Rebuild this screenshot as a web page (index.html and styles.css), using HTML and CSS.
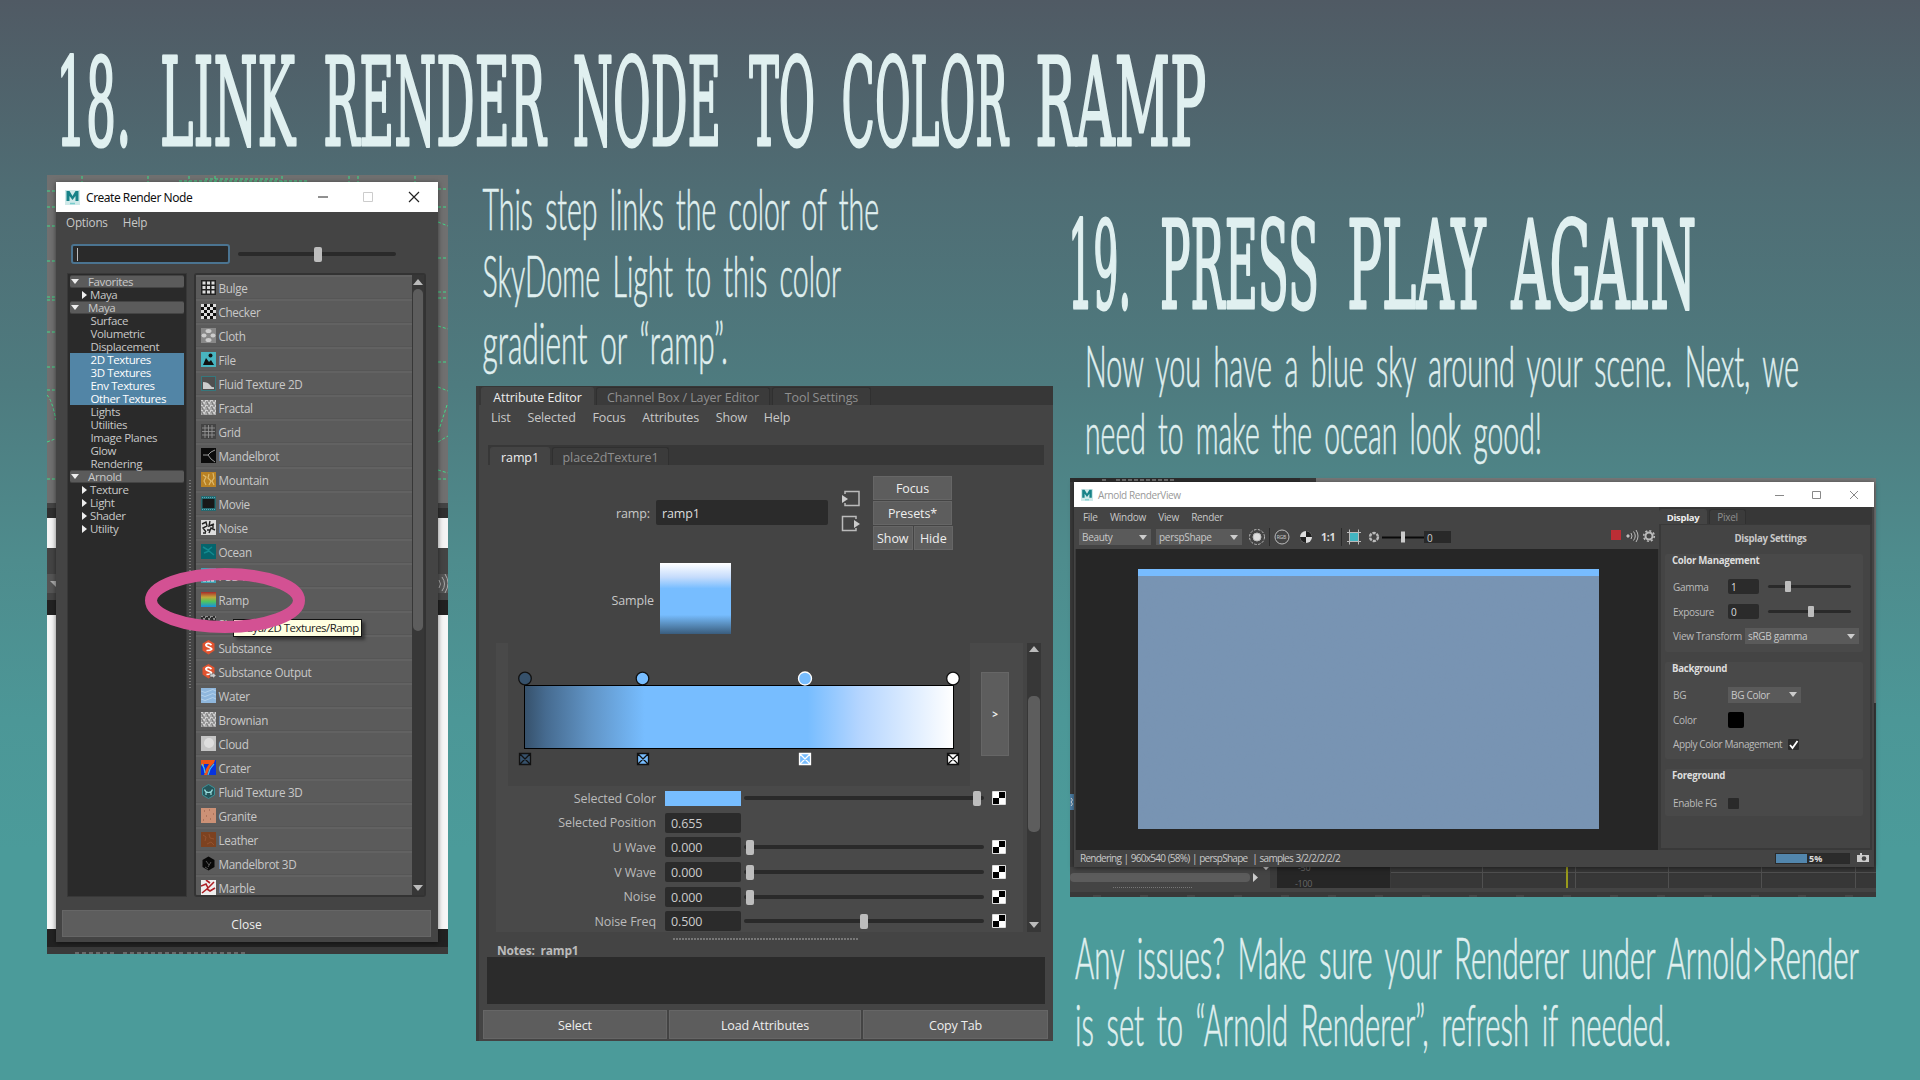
FILE: index.html
```html
<!DOCTYPE html>
<html lang="en">
<head>
<meta charset="utf-8">
<title>Link Render Node to Color Ramp</title>
<link rel="stylesheet" href="styles.css">
</head>
<body>
<svg width="0" height="0" class="defs">
  <defs>
    <symbol id="maya" viewBox="0 0 15 15"><rect width="15" height="15" fill="#cfe9e9"/><path d="M1.500 11V1h3l3 5 3-5h3v10h-3V6l-3 4-3-4v5z" fill="#178288"/><path d="M5 13.500h5" stroke="#7cc" stroke-width="1.500"/></symbol>
    <symbol id="checker" viewBox="0 0 14 14"><rect width="14" height="14" rx="1" fill="#ddd"/><path d="M7 1h6v6H7zM1 7h6v6H1z" fill="#000"/><path d="M1 1h6v6H1zM7 7h6v6H7z" fill="#fff"/></symbol>
    <pattern id="weave" width="5" height="5" patternUnits="userSpaceOnUse"><path d="M0 0h2v1H0zM2 2h2v2H2zM4 0h1v2H4z" fill="#fff" opacity=".45"/><path d="M1 3h1v2M3 0v1.500M0 2h1" stroke="#000" opacity=".3"/></pattern>
    <filter id="grain" x="0" y="0" width="100%" height="100%"><feTurbulence type="fractalNoise" baseFrequency=".35" numOctaves="2"/><feColorMatrix values="0 0 0 0 .2  0 0 0 0 .3  0 0 0 0 .45  .9 0 0 0 -.3"/></filter>
    <linearGradient id="rampv" x2="0" y2="1"><stop offset="0" stop-color="#a72b2b"/><stop offset=".35" stop-color="#c2a73a"/><stop offset=".62" stop-color="#53c65b"/><stop offset="1" stop-color="#168fe0"/></linearGradient>
  </defs>
</svg>

<main class="slide">
  <h1><svg width="1920" height="175">
    <g class="big" transform="scale(.4 1)">
      <text x="140" y="145" textLength="188" lengthAdjust="spacingAndGlyphs">18.</text>
      <text x="400" y="145" textLength="338" lengthAdjust="spacingAndGlyphs">LINK</text>
      <text x="808" y="145" textLength="557" lengthAdjust="spacingAndGlyphs">RENDER</text>
      <text x="1432" y="145" textLength="371" lengthAdjust="spacingAndGlyphs">NODE</text>
      <text x="1873" y="145" textLength="165" lengthAdjust="spacingAndGlyphs">TO</text>
      <text x="2104" y="145" textLength="416" lengthAdjust="spacingAndGlyphs">COLOR</text>
      <text x="2588" y="145" textLength="428" lengthAdjust="spacingAndGlyphs">RAMP</text>
    </g>
  </svg></h1>

  <div class="columns">
    <section class="shot shot-node">
      <svg class="backdrop" width="401" height="779">
        <g fill="none" stroke="#3fdc8a" stroke-dasharray="3 2">
          <path d="M35 1v7M101 1v7M142 1v7M168 1v7M235 1v7M302 1v7M311 1v7M368 1v7M132 6h130M158 4h75"/>
          <path d="M0 16h9M0 32h9M0 51h9M0 86h9M0 122h9M0 125h9M0 157h9M0 192h9M0 215h9M0 220q5 5 9 25M0 267l8-3M0 304h9"/>
          <path d="M391 14h10M391 32h10M391 47l10 4M391 83h10M391 117h10M391 123h10M391 151l10 3M391 187h10M391 212l10 4M400 230l-9 28M391 267l10-6M391 295l10 3M391 304h10"/>
        </g>
        <path d="M3 406h7v7z" fill="#aaa"/>
        <path d="M392 405q3 4 0 8M395 402q5 7 0 14M398 399q6 9 0 19" fill="none" stroke="#aaa"/>
        <path d="M28 778h40M76 778h60M140 778h24M166 778h34" stroke="#999" stroke-dasharray="4 3"/>
      </svg>
      <div class="window node-window">
        <header class="titlebar">
          <svg width="15" height="15"><use href="#maya"/></svg><span>Create Render Node</span>
          <svg class="winbtns" width="102" height="12"><path d="M0 6h10" stroke="#222"/><path d="M45.500 1.500h9v9h-9z" fill="none" stroke="#ccc"/><path d="M91 1l10 10M101 1l-10 10" stroke="#222" stroke-width="1.200"/></svg>
        </header>
        <nav class="menu"><span>Options</span><span>Help</span></nav>
        <div class="search"><div class="search-box"></div><div class="track"><i style="left:76px"></i></div></div>
        <div class="panes">
          <div class="tree">
            <div class="hd"><b></b>Favorites</div>
            <div class="sub"><u></u>Maya</div>
            <div class="hd"><b></b>Maya</div>
            <div>Surface</div><div>Volumetric</div><div>Displacement</div>
            <div class="sel">2D Textures</div><div class="sel">3D Textures</div><div class="sel">Env Textures</div><div class="sel">Other Textures</div>
            <div>Lights</div><div>Utilities</div><div>Image Planes</div><div>Glow</div><div>Rendering</div>
            <div class="hd"><b></b>Arnold</div>
            <div class="sub"><u></u>Texture</div><div class="sub"><u></u>Light</div><div class="sub"><u></u>Shader</div><div class="sub"><u></u>Utility</div>
          </div>
          <div class="splitter"></div>
          <div class="list">
            <div class="items">
              <div><svg viewBox="0 0 15 15"><rect width="15" height="15" fill="#222"/><path d="M1.500 3h12M1.500 7.500h12M1.500 12h12" stroke="#ddd" stroke-width="2.800" stroke-dasharray="3 1.500"/></svg>Bulge</div>
              <div><svg viewBox="0 0 15 15"><rect width="15" height="15" fill="#111"/><path d="M0 1.500h15M0 7.500h15M0 13.500h15" stroke="#ddd" stroke-width="3" stroke-dasharray="3"/><path d="M3 4.500h12M3 10.500h12" stroke="#ddd" stroke-width="3" stroke-dasharray="3"/></svg>Checker</div>
              <div><svg viewBox="0 0 15 15"><rect width="15" height="15" fill="#888"/><g fill="#ccc"><ellipse cx="7.500" cy="3" rx="3" ry="2"/><ellipse cx="3" cy="7.500" rx="2.500" ry="2"/><ellipse cx="12" cy="7.500" rx="2.500" ry="2"/><ellipse cx="7.500" cy="12" rx="3" ry="2"/></g></svg>Cloth</div>
              <div><svg viewBox="0 0 15 15"><rect width="15" height="15" fill="#48b4c0"/><path d="M2 13l3-7 3 4 2-2 3 5z" fill="#111"/><circle cx="9.500" cy="3.500" r="2" fill="#111"/></svg>File</div>
              <div><svg viewBox="0 0 15 15"><rect x=".5" y=".5" width="14" height="14" fill="#505050" stroke="#36777c"/><path d="M2 6q5 0 7 3t4 2v2H2z" fill="#ccc"/></svg>Fluid Texture 2D</div>
              <div><svg viewBox="0 0 15 15"><rect width="15" height="15" fill="#aaa"/><rect width="15" height="15" fill="url(#weave)"/></svg>Fractal</div>
              <div><svg viewBox="0 0 15 15"><rect width="15" height="15" fill="#444"/><path d="M1 4h13M1 7.500h13M1 11h13M4 1v13M7.500 1v13M11 1v13" stroke="#999" stroke-width=".8"/></svg>Grid</div>
              <div><svg viewBox="0 0 15 15"><rect width="15" height="15" fill="#0b0b0b"/><path d="M2 7h5l3-3 4-2M7 7l3 4 4 3" fill="none" stroke="#999"/></svg>Mandelbrot</div>
              <div><svg viewBox="0 0 15 15"><rect width="15" height="15" fill="#b98224"/><path d="M2 3l3 2-2 4 2 4M8 2l-1 4 3 3-2 4M12 1l1 5-2 3 2 4" fill="none" stroke="#ddb96c" stroke-width="1.200"/></svg>Mountain</div>
              <div><svg viewBox="0 0 15 15"><rect width="15" height="15" fill="#266a70"/><rect x="1.500" y="3" width="12" height="9" fill="#181818"/><path d="M1 1.500h13M1 13.500h13" stroke="#5ab" stroke-dasharray="1 1"/></svg>Movie</div>
              <div><svg viewBox="0 0 15 15"><rect width="15" height="15" fill="#ddd"/><path d="M1 4l4-2 1 4-4 2 3 4M9 1l-1 5 5-2M8 13l2-5 4 2M2 13h3M12 5v3M6 10h3" fill="none" stroke="#222" stroke-width="1.400"/></svg>Noise</div>
              <div><svg viewBox="0 0 15 15"><rect width="15" height="15" fill="#05646c"/><path d="M2 3l5 3 4-3M3 9l5-2 5 4" fill="none" stroke="#128a90" stroke-width="1.500"/></svg>Ocean</div>
              <div><svg viewBox="0 0 15 15"><rect width="15" height="15" fill="#3fa3b4"/><path d="M2 12h11" stroke="#eee" stroke-width="3" stroke-dasharray="3 1"/></svg>PSD File</div>
              <div><svg viewBox="0 0 15 15"><rect width="15" height="15" fill="url(#rampv)"/></svg>Ramp</div>
              <div><svg viewBox="0 0 15 15"><rect width="15" height="15" fill="#333"/><rect width="15" height="15" fill="url(#weave)"/></svg>Simplex Noise</div>
              <div><svg viewBox="0 0 15 15"><path d="M7.500 0l6 3.500v7l-6 4-6-4v-7z" fill="#e2532f"/><path d="M10.500 5q-3-2.500-5-1t2 3 3 2.500-5 1" fill="none" stroke="#fff" stroke-width="1.700"/></svg>Substance</div>
              <div><svg viewBox="0 0 15 15"><path d="M7.500 0l6 3.500v7l-6 4-6-4v-7z" fill="#e2532f"/><path d="M10.500 5q-3-2.500-5-1t2 3 3 2.500-5 1" fill="none" stroke="#fff" stroke-width="1.700"/><path d="M9 10h3V8.500l3 3-3 3V13H9z" fill="#ccc" stroke="#444" stroke-width=".5"/></svg>Substance Output</div>
              <div><svg viewBox="0 0 15 15"><rect width="15" height="15" fill="#8fb7dd"/><path d="M0 3q4 3 8 0t7 0M0 7q4 3 8 0t7 0M0 11q4 3 8 0t7 0" fill="none" stroke="#b4d2ec"/></svg>Water</div>
              <div><svg viewBox="0 0 15 15"><rect width="15" height="15" fill="#aaa"/><rect width="15" height="15" fill="url(#weave)"/></svg>Brownian</div>
              <div><svg viewBox="0 0 15 15"><rect width="15" height="15" fill="#c5c5c5"/><circle cx="8" cy="7" r="5" fill="#dedede"/></svg>Cloud</div>
              <div><svg viewBox="0 0 15 15"><rect width="15" height="15" fill="#0733dd"/><path d="M0 0h14l-1 3-4 4-3 8H3l2-6 3-5H3v3L0 5z" fill="#ef5615"/><path d="M1 4l2 4 1 5M13 4l-4 5-2 6" fill="none" stroke="#4bc3df" stroke-width="1.200"/></svg>Crater</div>
              <div><svg viewBox="0 0 15 15"><path d="M7.500.5l6 3.500v7l-6 3.500-6-3.500V4z" fill="#26555a" stroke="#3b9096"/><path d="M3.500 5.500q1 3 4 3t4-3M5 8v3M10 8v3" fill="none" stroke="#9dd" stroke-width="1.200"/></svg>Fluid Texture 3D</div>
              <div><svg viewBox="0 0 15 15"><rect width="15" height="15" fill="#cc9176"/><path d="M3 3h1M8 2h1M12 6h1M5 8h1M9 11h1M2 12h1" stroke="#8f5843"/></svg>Granite</div>
              <div><svg viewBox="0 0 15 15"><rect width="15" height="15" fill="#7d4220"/><path d="M2 3l3 2-1 4M8 2l1 4 4 1M6 12l4-2 3 3" fill="none" stroke="#935330"/></svg>Leather</div>
              <div><svg viewBox="0 0 15 15"><path d="M7.500.5l6 3.500v7l-6 3.500-6-3.500V4z" fill="#080808"/><path d="M5 5l3 4M10 6l-3 5M4 11l3 2" stroke="#555"/></svg>Mandelbrot 3D</div>
              <div><svg viewBox="0 0 15 15"><rect width="15" height="15" fill="#eee"/><path d="M0 6l5-2 2 4 6-6M1 13l5-4 3 2 5-3M5 0l4 3" fill="none" stroke="#ae1f25" stroke-width="1.600"/></svg>Marble</div>
            </div>
            <div class="sbar"><b class="up"></b><i></i><b class="dn"></b></div>
          </div>
        </div>
        <div class="btn close">Close</div>
      </div>
      <div class="tooltip">Maya/2D Textures/Ramp</div>
      <svg class="ring" width="162" height="67"><ellipse cx="81" cy="33.500" rx="74" ry="26.500" fill="none" stroke="#d35193" stroke-width="12"/></svg>
    </section>

    <section class="col-b">
      <svg width="577" height="211">
        <g class="body" transform="scale(.5 1)">
          <text x="13" y="55" textLength="793" lengthAdjust="spacingAndGlyphs">This step links the color of the</text>
          <text x="13" y="122" textLength="717" lengthAdjust="spacingAndGlyphs">SkyDome Light to this color</text>
          <text x="13" y="189" textLength="491" lengthAdjust="spacingAndGlyphs">gradient or “ramp”.</text>
        </g>
      </svg>
      <div class="attr">
        <div class="tabs outer"><span class="on">Attribute Editor</span><span class="t2">Channel Box / Layer Editor</span><span class="t3">Tool Settings</span></div>
        <nav class="menu"><span>List</span><span>Selected</span><span>Focus</span><span>Attributes</span><span>Show</span><span>Help</span></nav>
        <div class="tabs inner"><span class="on">ramp1</span><span class="t2">place2dTexture1</span></div>
        <div class="name-row">
          <label>ramp:</label><div class="field">ramp1</div>
          <svg width="20" height="42" fill="none" stroke="#bbb" stroke-width="1.500"><path d="M4 4V1.500h14v14H4V13"/><path d="M1 5l6 4-6 4z" fill="#ccc" stroke="none"/><path d="M15 29v-2.500H1.500v14H15V38"/><path d="M13 30l6 4-6 4z" fill="#ccc" stroke="none"/></svg>
          <div class="btns"><span class="btn wide">Focus</span><span class="btn wide">Presets*</span><span class="btn">Show</span><span class="btn">Hide</span></div>
        </div>
        <div class="sample-row"><label>Sample</label><div class="swatch"></div></div>
        <div class="scroller">
          <div class="content">
            <div class="ramp-row">
              <div class="ramp-area">
                <svg width="462" height="143">
                  <defs><linearGradient id="ramph"><stop offset="0" stop-color="#36516b"/><stop offset=".05" stop-color="#466b90"/><stop offset=".15" stop-color="#6093c4"/><stop offset=".28" stop-color="#77bdff"/><stop offset=".66" stop-color="#77bdff"/><stop offset=".78" stop-color="#b4d5ff"/><stop offset="1" stop-color="#fff"/></linearGradient></defs>
                  <rect x="16.500" y="42.500" width="429" height="63" fill="url(#ramph)" stroke="#000"/>
                  <g stroke="#111" stroke-width="1.300"><circle cx="17" cy="35.500" r="6.300" fill="#36516b"/><circle cx="134.500" cy="35.500" r="6.300" fill="#77bdff"/><circle cx="297" cy="35.500" r="6.500" fill="#77bdff" stroke="#fff"/><circle cx="445" cy="35.500" r="6.300" fill="#fff"/></g>
                  <g stroke="#111" stroke-width="1.300"><path d="M11.500 110.500h11v11h-11zl11 11m0-11l-11 11" fill="#36516b"/><path d="M129.500 110.500h11v11h-11zl11 11m0-11l-11 11" fill="#77bdff"/><path d="M291.500 110.500h11v11h-11zl11 11m0-11l-11 11" fill="#77bdff" stroke="#fff"/><path d="M439.500 110.500h11v11h-11zl11 11m0-11l-11 11" fill="#fff"/></g>
                </svg>
              </div>
              <div class="btn more">&gt;</div>
            </div>
            <div class="row"><label>Selected Color</label><div class="color"></div><div class="track"><i style="left:229px"></i></div><svg width="14" height="14"><use href="#checker"/></svg></div>
            <div class="row"><label>Selected Position</label><div class="field">0.655</div></div>
            <div class="row"><label>U Wave</label><div class="field">0.000</div><div class="track"><i style="left:2px"></i></div><svg width="14" height="14"><use href="#checker"/></svg></div>
            <div class="row"><label>V Wave</label><div class="field">0.000</div><div class="track"><i style="left:2px"></i></div><svg width="14" height="14"><use href="#checker"/></svg></div>
            <div class="row"><label>Noise</label><div class="field">0.000</div><div class="track"><i style="left:2px"></i></div><svg width="14" height="14"><use href="#checker"/></svg></div>
            <div class="row"><label>Noise Freq</label><div class="field">0.500</div><div class="track"><i style="left:116px"></i></div><svg width="14" height="14"><use href="#checker"/></svg></div>
          </div>
          <div class="sbar"><b class="up"></b><i></i><b class="dn"></b></div>
        </div>
        <div class="dots"></div>
        <div class="notes-label">Notes:&nbsp; ramp1</div>
        <div class="notes"></div>
        <footer><span class="btn">Select</span><span class="btn">Load Attributes</span><span class="btn">Copy Tab</span></footer>
      </div>
    </section>

    <section class="col-c">
      <svg width="850" height="303">
        <g class="big" transform="scale(.4 1)">
          <text x="-5" y="133" textLength="158" lengthAdjust="spacingAndGlyphs">19.</text>
          <text x="225" y="133" textLength="398" lengthAdjust="spacingAndGlyphs">PRESS</text>
          <text x="693" y="133" textLength="346" lengthAdjust="spacingAndGlyphs">PLAY</text>
          <text x="1104" y="133" textLength="462" lengthAdjust="spacingAndGlyphs">AGAIN</text>
        </g>
        <g class="body" transform="scale(.5 1)">
          <text x="30" y="212" textLength="1428" lengthAdjust="spacingAndGlyphs">Now you have a blue sky around your scene. Next, we</text>
          <text x="30" y="279" textLength="914" lengthAdjust="spacingAndGlyphs">need to make the ocean look good!</text>
        </g>
      </svg>
      <div class="shot-render">
        <svg class="backdrop" width="806" height="419">
          <rect width="806" height="419" fill="#3b3b3b"/><rect x="246" width="560" height="225" fill="#777"/><rect width="230" height="4" fill="#2c2c2c"/>
          <path d="M32 2h6M46 2h60" stroke="#aaa" stroke-dasharray="4 2"/>
          <rect x="0" y="316" width="4" height="16" fill="#4c7fa5"/><path d="M1 320q3 2 0 4q3 2 0 4" fill="none" stroke="#ddd"/>
          <rect y="389" width="200" height="30" fill="#444"/><rect y="395" width="180" height="9" rx="4" fill="#5c5c5c"/><path d="M183 395l5 4.500-5 4.500zM193 389h6l-3 3z" fill="#ccc"/><path d="M43 409.500h80" stroke="#777" stroke-dasharray="1 1"/>
          <rect x="207" y="389" width="113" height="21" fill="#262626"/><rect x="321" y="389" width="485" height="21" fill="#373737"/>
          <path d="M321 394.500h485M412.500 389v21M505.500 389v21M598.500 389v21M691.500 389v21M785.500 389v21" stroke="#505050"/><path d="M497 389v21" stroke="#999a1c" stroke-width="2"/>
          <rect y="410" width="806" height="9" fill="#444"/><rect y="414" width="806" height="5" fill="#393939"/><path d="M23 418h780" stroke="#555" stroke-dasharray="8 39"/>
          <text x="225" y="409">-100</text><text x="228" y="393">-50</text>
        </svg>
        <div class="window render-window">
          <header class="titlebar">
            <svg width="12" height="12"><use href="#maya"/></svg><span>Arnold RenderView</span>
            <svg class="winbtns" width="84" height="10" fill="none" stroke="#888"><path d="M0 5.500h9M37.500 1.500h8v7h-8zM75 1l8 8M83 1l-8 8"/></svg>
          </header>
          <div class="split">
            <div class="left">
              <nav class="menu"><span>File</span><span>Window</span><span>View</span><span>Render</span></nav>
              <div class="toolbar">
                <div class="drop d1">Beauty<b></b></div><div class="drop d2">perspShape<b></b></div>
                <svg width="206" height="20" fill="none" stroke="#bbb">
                  <circle cx="12" cy="9" r="4" fill="#ddd"/><circle cx="12" cy="9" r="7.500" stroke-dasharray="2.500 1.500"/><path d="M24.500 0v18M96.500 0v18" stroke="#2b2b2b"/>
                  <circle cx="37" cy="9" r="7"/><text x="31.800" y="11.300" class="rgb">RGB</text>
                  <circle cx="61" cy="9" r="6" fill="#ddd" stroke="none"/><path d="M61 9V3a6 6 0 0 1 6 6zM61 9v6a6 6 0 0 1-6-6z" fill="#222" stroke="none"/>
                  <text x="76" y="13" class="one">1:1</text>
                  <rect x="104.500" y="4.500" width="9" height="9" fill="#43b5c2"/><path d="M104.500 1.500v15M113.500 1.500v15M102 4.500h14M102 13.500h14"/>
                  <circle cx="129" cy="9" r="4" stroke-width="2.400" stroke-dasharray="3.200 1"/>
                  <path d="M137 9.500h42" stroke="#0a0a0a" stroke-width="2"/><path d="M158 3.500v11" stroke="#ccc" stroke-width="4"/>
                  <rect x="179" y="3" width="27" height="12" fill="#292929" stroke="none"/>
                </svg>
                <div class="exp">0</div>
                <svg class="right" width="48" height="20" fill="none" stroke="#bbb"><rect x="0" y="2" width="10" height="10" fill="#bb2e35" stroke="none"/><circle cx="17" cy="8" r="1.200" fill="#ccc"/><path d="M20 5q2 3 0 6M22.500 3.500q3.500 4.500 0 9M25 2q4 6 0 12"/><circle cx="38" cy="8" r="3.500" stroke-width="2"/><circle cx="38" cy="8" r="5.300" stroke-width="1.600" stroke-dasharray="2.100 2"/></svg>
              </div>
              <div class="view"><svg width="461" height="260"><rect width="461" height="260" fill="#7894b3"/><rect width="461" height="260" filter="url(#grain)" opacity=".5"/><rect width="461" height="7" fill="#77bcff"/></svg></div>
            </div>
            <aside>
              <div class="tabs"><span class="on">Display</span><span>Pixel</span></div>
              <div class="settings">
                <h3>Display Settings</h3>
                <div class="group g1"><h4>Color Management</h4>
                  <div class="r"><label>Gamma</label><div class="field">1</div><div class="track"><i style="left:17px"></i></div></div>
                  <div class="r"><label>Exposure</label><div class="field">0</div><div class="track"><i style="left:40px"></i></div></div>
                  <div class="r"><label class="vt">View Transform</label><div class="drop w114">sRGB gamma<b></b></div></div>
                </div>
                <div class="group g2"><h4>Background</h4>
                  <div class="r"><label>BG</label><div class="drop w73">BG Color<b></b></div></div>
                  <div class="r"><label>Color</label><div class="black"></div></div>
                  <div class="r"><label class="acm">Apply Color Management</label><div class="box"><svg width="11" height="11"><path d="M2 6l2.500 3L9.500 2" fill="none" stroke="#fff" stroke-width="1.800"/></svg></div></div>
                </div>
                <div class="group g3"><h4>Foreground</h4><div class="r"><label>Enable FG</label><div class="box"></div></div></div>
              </div>
            </aside>
          </div>
          <div class="status"><span>Rendering | 960x540 (58%) | perspShape&nbsp; | samples 3/2/2/2/2/2</span><div class="prog">5%</div><svg width="12" height="10"><path d="M0 2h3V0h2v2h7v7H0z" fill="#ccc"/><circle cx="7" cy="5.500" r="2.300" fill="#444"/></svg></div>
        </div>
      </div>
      <svg width="850" height="183">
        <g class="body" transform="scale(.5 1)">
          <text x="10" y="82" textLength="1568" lengthAdjust="spacingAndGlyphs">Any issues? Make sure your Renderer under Arnold&gt;Render</text>
          <text x="10" y="149" textLength="1192" lengthAdjust="spacingAndGlyphs">is set to “Arnold Renderer”, refresh if needed.</text>
        </g>
      </svg>
    </section>
  </div>
</main>
</body>
</html>
```
FILE: styles.css
```css
* { box-sizing: border-box; }
body { margin: 0; width: 1920px; height: 1080px; overflow: hidden; }
svg { display: block; flex: none; }
h1, h3, h4 { margin: 0; font-weight: normal; }
.defs { position: absolute; }

.slide {
  width: 1920px; height: 1080px;
  background: linear-gradient(#505a64 0, #4f6d74 190px, #4e7b7f 385px, #4e8c8d 560px, #4c9797 720px, #4b9b9a 850px, #4b9b9a);
  font-family: "Open Sans", "Noto Sans", sans-serif; font-size: 12px; color: #c8c8c8;
}
.big { font-family: "DejaVu Serif", serif; font-size: 121px; fill: #e0f0f0; stroke: #e0f0f0; stroke-width: 3px; stroke-linejoin: round; }
.body { font-family: Lato, sans-serif; font-weight: 300; font-size: 56.5px; fill: #e0f0f0; stroke: #e0f0f0; stroke-width: .6px; word-spacing: 9px; }
.columns { display: flex; align-items: flex-start; padding-left: 47px; }
.col-b { width: 577px; margin: 0 17px 0 28px; }
.col-b > svg { overflow: visible; }
.col-c { width: 806px; }
.col-c > svg { overflow: visible; }

/* shared widgets */
.window { position: relative; background: #444; box-shadow: 0 1px 5px rgba(0,0,0,.5); }
.backdrop { position: absolute; left: 0; top: 0; }
.titlebar { display: flex; align-items: center; background: #fff; color: #111; }
.winbtns { margin-left: auto; }
.menu { display: flex; white-space: nowrap; }
.btn { display: flex; align-items: center; justify-content: center; background: #5d5d5d; color: #eee; border: 1px solid #666; }
.track { position: relative; height: 4px; border-radius: 2px; background: #2a2a2a; }
.track i { position: absolute; top: -5px; width: 8px; height: 15px; border-radius: 2px; background: #bdbdbd; }
.field { background: #2b2b2b; border-radius: 2px; display: flex; align-items: center; }
.sbar { display: flex; flex-direction: column; align-items: center; background: #373737; }
.sbar i { background: #5d5d5d; border-radius: 5px; }
.sbar b { border: 5px solid transparent; }
.sbar .up { border-top: 0; border-bottom: 6px solid #bbb; }
.sbar .dn { border-bottom: 0; border-top: 6px solid #bbb; margin-top: auto; }

/* Create Render Node */
.shot { position: relative; width: 401px; height: 779px; padding: 7px 0 0 9px;
  background: linear-gradient(#707070 0 328px, #444 328px 333px, #303030 333px 343px, #f4f4f4 343px 373px, #444 373px 399px, #555 399px 418px, #444 418px 425px, #222 425px 440px, #f6f6f6 440px 754px, #222 754px 772px, #3a3a3a 772px); }
.node-window { width: 382px; height: 760px; }
.node-window .titlebar { height: 30px; padding: 0 18px 0 9px; gap: 6px; font-family: "Noto Sans", sans-serif; font-size: 12px; letter-spacing: -.45px; }
.node-window .menu { height: 20px; padding: 0 0 1px 10px; gap: 15px; align-items: center; font-size: 11.7px; letter-spacing: -.2px; }
.search { display: flex; align-items: center; height: 41px; padding: 3px 0 0 15px; }
.search-box { width: 159px; height: 20px; margin-right: 8px; border: 2px solid #4b7491; border-radius: 3px; background: #2a2a2a; padding: 2px 4px; }
.search-box::before { content: ""; display: block; width: 1px; height: 13px; background: #bbb; }
.search .track { width: 158px; }
.panes { display: flex; height: 624px; padding-left: 11px; }
.tree { width: 120px; padding: 1px 2px; border: 1px solid #383838; background: #2a2a2a; font-size: 11.5px; letter-spacing: -.38px; }
.tree div { height: 13px; line-height: 13px; padding-left: 20.5px; white-space: nowrap; display: flex; align-items: center; }
.tree .hd { background: #5b5b5b; border-top: 1px solid #444; border-bottom: 1px solid #444; padding-left: 1px; border-radius: 2px; }
.tree .hd b { border: 4px solid transparent; border-top: 5px solid #eee; border-bottom: 0; margin-right: 9px; }
.tree .sub { padding-left: 12px; }
.tree .sub u { border: 4px solid transparent; border-left: 5px solid #eee; border-right: 0; margin-right: 3px; }
.tree .sel { background: #5285a6; color: #fff; }
.splitter { width: 2px; height: 208px; margin: 207px 3px 0 2px; background: repeating-linear-gradient(#777 0 1px, #444 1px 3px); }
.list { display: flex; width: 232px; border: 2px solid #333; border-radius: 3px; overflow: hidden; }
.items { width: 216px; overflow: hidden; font-size: 11.7px; letter-spacing: -.33px; }
.items div { height: 24px; display: flex; align-items: center; gap: 2.5px; padding: 0 0 0 5px; background: #5b5b5b; border-top: 2px solid #626262; border-bottom: 1px solid #565656; white-space: nowrap; }
.items svg { width: 15px; height: 15px; }
.list .sbar { width: 12px; padding: 4px 0; }
.list .sbar i { width: 10px; height: 342px; margin-top: 4px; }
.close { width: 369px; height: 27px; margin: 13px 0 0 6px; padding-top: 1px; }
.tooltip { position: absolute; left: 186px; top: 444px; width: 129px; height: 18px; background: #ffffe1; border: 1px solid #111; color: #222; line-height: 16px; padding-left: 3px; font-size: 11.4px; letter-spacing: -.48px; white-space: nowrap; box-shadow: 3px 3px 3px rgba(0,0,0,.4); }
.ring { position: absolute; left: 97px; top: 392px; }

/* Attribute Editor */
.attr { width: 577px; height: 655px; background: #444; border-left: 3px solid #3a3a3a; font-size: 12.5px; letter-spacing: -.1px; }
.tabs { display: flex; background: #373737; }
.tabs span { display: flex; align-items: center; justify-content: center; color: #8f8f8f; border: 1px solid #303030; border-bottom: 0; border-radius: 3px 3px 0 0; background: #3b3b3b; white-space: nowrap; }
.tabs span.on { background: #444; color: #eee; border-color: #444; }
.outer { height: 19px; padding: 1px 0 0 2px; gap: 2px; }
.attr .tabs span { padding-top: 2px; }
.outer .on { width: 113px; } .outer .t2 { width: 174px; } .outer .t3 { width: 99px; }
.attr .menu { height: 24px; align-items: center; padding-left: 12px; gap: 16.7px; }
.inner { width: 556px; height: 20px; margin: 16px 0 0 9px; padding: 2px 0 0 2px; gap: 2px; }
.inner .on { width: 60px; } .inner .t2 { width: 117px; }
.name-row { display: flex; height: 84px; padding-top: 11px; }
.name-row label { width: 171px; margin-right: 6px; text-align: right; padding-top: 29px; }
.name-row .field { width: 172px; height: 25px; margin: 24px 13px 0 0; padding: 2px 0 0 6px; color: #ddd; }
.name-row > svg { margin: 14px 12px 0 0; }
.btns { width: 82px; display: flex; flex-wrap: wrap; gap: 1px; align-content: flex-start; }
.btns .btn { width: 39.5px; height: 24px; } .btns .btn.wide { width: 79px; }
.sample-row { display: flex; margin-top: 14px; height: 71px; align-items: center; }
.sample-row label { width: 175px; text-align: right; margin-right: 6px; padding-top: 4px; }
.swatch { width: 71px; height: 71px; background: linear-gradient(#fff, #c5dcfc 20%, #77bdff 36%, #77bdff 73%, #5a8fbf 86%, #3a5d7e); }
.scroller { display: flex; height: 289px; margin: 9px 0 0 17px; }
.content { width: 527px; margin-right: 4px; background: #494949; overflow: hidden; }
.ramp-row { display: flex; padding-left: 12px; height: 143px; }
.ramp-area { width: 462px; background: #444; }
.more { width: 28px; height: 84px; margin: 29px 0 0 11px; font-size: 10px; font-weight: bold; }
.row { display: flex; align-items: center; height: 24.6px; }
.row label { width: 160px; margin-right: 9px; text-align: right; color: #bbb; }
.row .field { width: 76px; height: 20px; padding: 1px 0 0 6px; color: #ccc; }
.color { width: 76px; height: 15px; background: #77bdff; }
.row .track { width: 240px; margin: 0 8px 0 3px; }
.scroller .sbar { width: 14px; padding: 3px 0 4px; }
.scroller .sbar i { width: 12px; height: 136px; margin-top: 44px; }
.dots { width: 186px; height: 2px; margin: 6px 0 0 194px; background: repeating-linear-gradient(90deg, #777 0 2px, #444 2px 3px); }
.notes-label { height: 17px; line-height: 21px; padding-left: 18px; font-weight: 700; font-size: 12px; letter-spacing: -.2px; color: #bbb; }
.notes { width: 558px; height: 47px; margin-left: 8px; background: #2b2b2b; }
footer { display: grid; grid-template-columns: 184px 192px 185px; gap: 2px; padding: 6px 0 0 4px; height: 35px; }
footer .btn { padding-top: 1px; }

/* Arnold RenderView */
.shot-render { position: relative; width: 806px; height: 419px; padding: 4px 0 0 4px; font-size: 10px; letter-spacing: -.3px; }
.backdrop text { font: 9px "Open Sans", sans-serif; fill: #666; }
.render-window { width: 800px; height: 385px; }
.render-window .titlebar { height: 25px; padding: 0 15px 0 7px; gap: 5px; color: #999; letter-spacing: -.4px; }
.split { display: flex; height: 343px; }
.left { width: 585px; }
.left .menu { height: 20px; align-items: center; padding-left: 9px; gap: 12.3px; }
.toolbar { display: flex; align-items: center; height: 22px; padding-left: 5px; }
.drop { position: relative; display: flex; align-items: center; justify-content: space-between; height: 16px; background: #5a5a5a; padding: 0 4px 0 3px; white-space: nowrap; }
.toolbar .drop { margin-bottom: 2px; }
.drop b { border: 4px solid transparent; border-top: 5px solid #ccc; border-bottom: 0; }
.toolbar .d1 { width: 72px; margin-right: 5px; } .toolbar .d2 { width: 86px; margin-right: 3px; }
.rgb { font: 5px "Open Sans", sans-serif; fill: #ccc; stroke: none; }
.one { font: 700 10.5px "Open Sans", sans-serif; fill: #ddd; stroke: none; }
.exp { width: 9px; margin: 0 0 1px -24px; color: #ccc; }
.right { margin-left: auto; }
.view { display: flex; height: 301px; margin-left: 1px; padding: 20px 0 0 62px; background: #262626; border: 1px solid #3a3a3a; border-width: 0 1px; }
aside { width: 215px; padding-right: 2px; }
aside .tabs { height: 17px; padding-top: 2px; gap: 2px; }
aside .tabs span { width: 37px; }
aside .tabs span.on { font-weight: 700; font-size: 9.5px; width: 48px; }
.settings { height: 326px; border: 2px solid #393939; border-top-width: 1px; padding: 7px 0 0 4px; }
h3 { font-size: 9.7px; line-height: 14px; font-weight: 700; text-align: center; padding-left: 6px; }
.group { width: 198px; background: #494949; border-radius: 2px; padding-left: 8px; }
h4 { font-size: 9.7px; line-height: 13px; font-weight: 700; color: #ddd; margin: 0 0 0 -1px; }
.g1 { height: 98px; margin-top: 8px; } .g2 { height: 97px; margin-top: 10px; } .g3 { height: 47px; margin-top: 10px; }
.r { display: flex; align-items: center; height: 24.7px; white-space: nowrap; }
h4 + .r { margin-top: 7.5px; }
.g3 .r { margin-top: 9px; }
.r label { width: 55px; color: #bbb; flex: none; }
.r .vt { width: 72px; } .r .acm { width: 115px; letter-spacing: -.4px; }
.r .field { width: 31px; height: 15px; margin-right: 9px; padding-left: 3px; color: #ddd; }
.r .track { width: 83px; height: 3px; }
.r .track i { width: 6px; height: 11px; top: -4px; border-radius: 1px; }
.w114 { width: 114px; } .w73 { width: 73px; }
.black { width: 16px; height: 16px; background: #000; border-radius: 2px; }
.box { width: 11px; height: 11px; background: #2a2a2a; border-radius: 1px; }
.status { display: flex; align-items: center; height: 16px; padding-left: 6px; letter-spacing: -.74px; word-spacing: .6px; }
.prog { width: 75px; height: 11px; margin: 0 7px 0 auto; padding-left: 33px; line-height: 9px; font-weight: 700; font-size: 9px; letter-spacing: 0; color: #ddd; border: 1px solid #2a2a2a; background: linear-gradient(90deg, #5286ad 31px, #2b2b2b 31px); }
.status > svg { margin-right: 5px; }
```
